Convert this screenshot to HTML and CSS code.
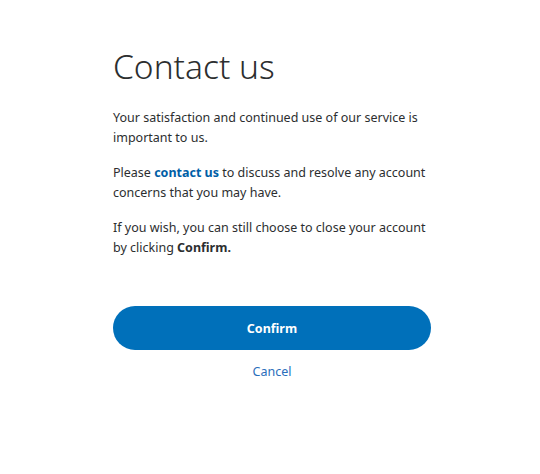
FILE: index.html
```html
<!DOCTYPE html>
<html lang="en">
<head>
    <meta charset="UTF-8">
    <title>Contact us</title>
    <link rel="stylesheet" href="styles.css">
</head>
<body>
    <div class="painel">
        <h1 class="titulo">Contact us</h1>
        <p class="texto">Your satisfaction and continued use of our service is important to us.</p>
        <p class="texto">Please <a href="#" class="link">contact us</a> to discuss and resolve any account concerns that you may have.</p>
        <p class="texto">If you wish, you can still choose to close your account by clicking <b>Confirm.</b></p>
        <div class="acoes">
            <button class="btn">Confirm</button>
            <a href="#" class="cancelar">Cancel</a>
        </div>
    </div>
</body>
</html>
```

FILE: styles.css
```css
* {
    margin: 0;
    padding: 0;
    box-sizing: border-box;
}

body {
    background: #fff;
    font-family: "Noto Sans", sans-serif;
    color: #2c2e2f;
}

.painel {
    width: 318px;
    margin: 0 0 0 113px;
    padding-top: 44px;
}

.titulo {
    font-size: 33.5px;
    font-weight: 300;
    line-height: 44px;
    color: #2c2e2f;
    margin-bottom: 20px;
}

.texto {
    font-size: 12.5px;
    line-height: 20px;
    margin-bottom: 15px;
}

.texto b {
    font-weight: bold;
}

.link {
    color: #005ea6;
    font-weight: bold;
    text-decoration: none;
}

.acoes {
    display: flex;
    flex-direction: column;
    align-items: center;
    margin-top: 48px;
}

.btn {
    width: 100%;
    height: 44px;
    border: none;
    border-radius: 22px;
    background: #0070ba;
    color: #fff;
    font-family: inherit;
    font-size: 12.5px;
    font-weight: bold;
}

.cancelar {
    margin-top: 13px;
    font-size: 12.5px;
    color: #2a6ebb;
    text-decoration: none;
}
```
